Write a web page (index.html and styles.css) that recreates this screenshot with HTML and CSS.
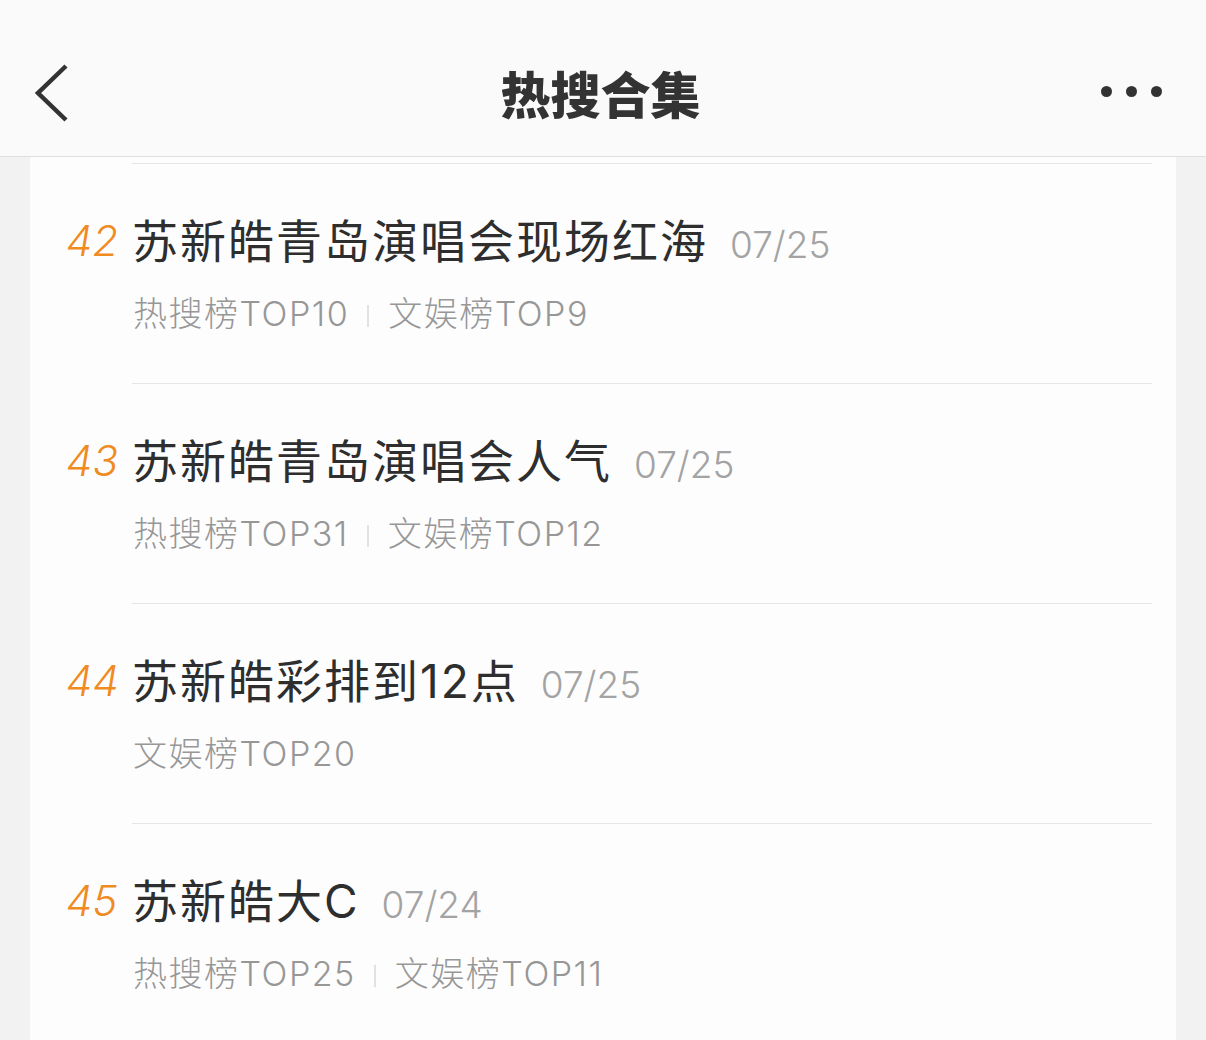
FILE: index.html
```html
<!DOCTYPE html>
<html lang="zh-CN">
<head>
<meta charset="utf-8">
<title>热搜合集</title>
<link rel="stylesheet" href="styles.css">
</head>
<body>
<header class="topbar">
  <div class="back">
    <svg width="40" height="60" viewBox="0 0 40 60"><polyline points="32,3 4,30 32,57" fill="none" stroke="#333" stroke-width="4.5" stroke-linecap="butt" stroke-linejoin="miter"/></svg>
  </div>
  <h1 class="title">热搜合集</h1>
  <div class="more"><span class="dot"></span><span class="dot"></span><span class="dot"></span></div>
</header>
<main class="card">
  <div class="item">
    <div class="rank">42</div>
    <div class="body">
      <div class="headline"><span class="name">苏新皓青岛演唱会现场红海</span><span class="date">07/25</span></div>
      <div class="tags"><span>热搜榜TOP10</span><i class="bar"></i><span>文娱榜TOP9</span></div>
    </div>
  </div>
  <div class="item">
    <div class="rank">43</div>
    <div class="body">
      <div class="headline"><span class="name">苏新皓青岛演唱会人气</span><span class="date">07/25</span></div>
      <div class="tags"><span>热搜榜TOP31</span><i class="bar"></i><span>文娱榜TOP12</span></div>
    </div>
  </div>
  <div class="item">
    <div class="rank">44</div>
    <div class="body">
      <div class="headline"><span class="name">苏新皓彩排到12点</span><span class="date">07/25</span></div>
      <div class="tags"><span>文娱榜TOP20</span></div>
    </div>
  </div>
  <div class="item">
    <div class="rank">45</div>
    <div class="body">
      <div class="headline"><span class="name">苏新皓大C</span><span class="date">07/24</span></div>
      <div class="tags"><span>热搜榜TOP25</span><i class="bar"></i><span>文娱榜TOP11</span></div>
    </div>
  </div>
</main>
</body>
</html>
```
FILE: styles.css
```css
html, body {
  margin: 0;
  padding: 0;
}
body {
  background: #f2f2f2;
  font-family: "Inter", "Noto Sans CJK SC", sans-serif;
  height: 1040px;
  overflow: hidden;
}
.topbar {
  height: 156px;
  background: #fafafa;
  border-bottom: 1px solid #dedede;
  display: flex;
  align-items: center;
  justify-content: space-between;
  padding: 0 44px 0 34px;
}
.back {
  display: flex;
  align-items: center;
  padding-top: 30px;
}
.back svg { display: block; }
.title {
  margin: 0;
  font-family: "Noto Sans CJK SC", sans-serif;
  font-size: 50px;
  font-weight: 900;
  color: #333;
  padding-top: 28px;
  padding-left: 26px;
}
.more {
  display: flex;
  gap: 14px;
  padding-top: 27px;
}
.dot {
  width: 11px;
  height: 11px;
  border-radius: 50%;
  background: #333;
}
.card {
  margin: 0 30px;
  background: #fdfdfd;
  padding-top: 6px;
  min-height: 900px;
}
.item {
  display: grid;
  grid-template-columns: 66px 1fr;
  padding: 0 24px 0 36px;
}
.rank {
  padding-top: 50px;
  line-height: 56px;
  font-size: 42px;
  font-style: italic;
  font-weight: 300;
  color: #ef8b1f;
}
.body {
  border-top: 1px solid #e6e6e6;
  padding: 49px 0 45px 0;
}
.headline {
  line-height: 56px;
  height: 56px;
  white-space: nowrap;
}
.name {
  font-size: 46px;
  color: #2e2e2e;
  letter-spacing: 2px;
}
.date {
  font-size: 37px;
  font-weight: 300;
  color: #a3a3a3;
  margin-left: 22px;
}
.tags {
  margin-top: 21px;
  height: 48px;
  line-height: 48px;
  font-size: 34px;
  font-weight: 300;
  letter-spacing: 1.5px;
  color: #979797;
  display: flex;
  align-items: center;
  padding-left: 1px;
}
.bar {
  display: inline-block;
  width: 2px;
  height: 22px;
  background: #e2e2e2;
  margin: 4px 19px 0 18px;
}
```
